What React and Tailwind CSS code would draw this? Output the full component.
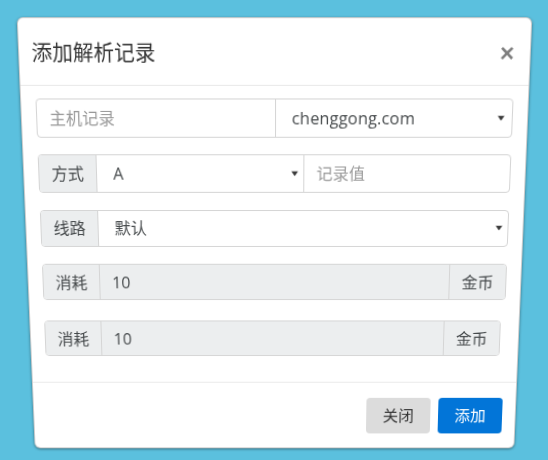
import React from 'react';

const Caret = ({ className }) => (
  <svg className={className} width="7" height="5" viewBox="0 0 7 5">
    <path d="M0 0h7L3.5 5z" fill="#3a3a3a" />
  </svg>
);

const Addon = ({ children, className = '' }) => (
  <div className={`flex items-center bg-[#eceeef] px-[12px] text-[#464a4c] ${className}`}>{children}</div>
);

const CostRow = ({ className = '' }) => (
  <div className={`flex h-[37.5px] rounded-[4px] border border-[#d5d5d5] ${className}`}>
    <Addon className="rounded-l-[3px] border-r border-[#d5d5d5]">消耗</Addon>
    <div className="flex flex-1 items-center bg-[#eceeef] px-[12px] text-[#464a4c]">10</div>
    <Addon className="rounded-r-[3px] border-l border-[#d5d5d5]">金币</Addon>
  </div>
);

export default function App() {
  return (
    <div className="h-[460px] overflow-hidden bg-[#5bc0de] pt-[24px] font-['Open_Sans','Noto_Sans_CJK_SC',sans-serif] text-[16px]">
      <div className="mx-auto w-[497px] rounded-[6px] border border-black/20 bg-white shadow-[0_1px_3px_rgba(0,0,0,0.45)] [transform:perspective(625px)_rotateX(-6deg)]">
        {/* header */}
        <div className="flex h-[64px] items-center justify-between border-b border-[#e9e9e9] pl-[12px] pr-[15px] pt-[3px]">
          <h4 className="text-[20px] leading-[26px] font-normal text-[#333]">添加解析记录</h4>
          <button type="button" className="text-[24px] leading-none font-bold text-black/50 font-['Liberation_Sans',sans-serif]">×</button>
        </div>

        {/* body */}
        <div className="flex flex-col px-[14px] pt-[12px] pb-[27px]">
          <div className="grid h-[37.5px] grid-cols-2 rounded-[4px] border border-[#d5d5d5]">
            <div className="flex items-center px-[12px] text-[#999]">主机记录</div>
            <div className="relative flex items-center border-l border-[#d5d5d5] pl-[16px] tracking-[0.2px] text-[#464a4c]">
              chenggong.com
              <Caret className="absolute right-[7px] top-1/2 -translate-y-1/2" />
            </div>
          </div>

          <div className="mt-[16.75px] grid h-[37.5px] grid-cols-[auto_1fr_1fr] rounded-[4px] border border-[#d5d5d5]">
            <Addon className="rounded-l-[3px] border-r border-[#d5d5d5]">方式</Addon>
            <div className="relative flex items-center pl-[16px] text-[#464a4c]">
              A
              <Caret className="absolute right-[5px] top-1/2 -translate-y-1/2" />
            </div>
            <div className="flex items-center border-l border-[#d5d5d5] px-[12px] text-[#999]">记录值</div>
          </div>

          <div className="mt-[16.75px] flex h-[37.5px] rounded-[4px] border border-[#d5d5d5]">
            <Addon className="rounded-l-[3px] border-r border-[#d5d5d5]">线路</Addon>
            <div className="relative flex flex-1 items-center pl-[16px] text-[#464a4c]">
              默认
              <Caret className="absolute right-[5px] top-1/2 -translate-y-1/2" />
            </div>
          </div>

          <CostRow className="mt-[16.75px]" />
          <CostRow className="mt-[20.5px] mr-[4px]" />
        </div>

        {/* footer */}
        <div className="flex justify-end gap-[8px] border-t border-[#e9e9e9] pr-[13px] pt-[15.5px] pb-[15px]">
          <button type="button" className="h-[38px] w-[66px] rounded-[4px] bg-[#dcdcdc] text-[#333]">关闭</button>
          <button type="button" className="h-[38px] w-[66px] rounded-[4px] bg-[#0275d8] text-white">添加</button>
        </div>
      </div>
    </div>
  );
}
